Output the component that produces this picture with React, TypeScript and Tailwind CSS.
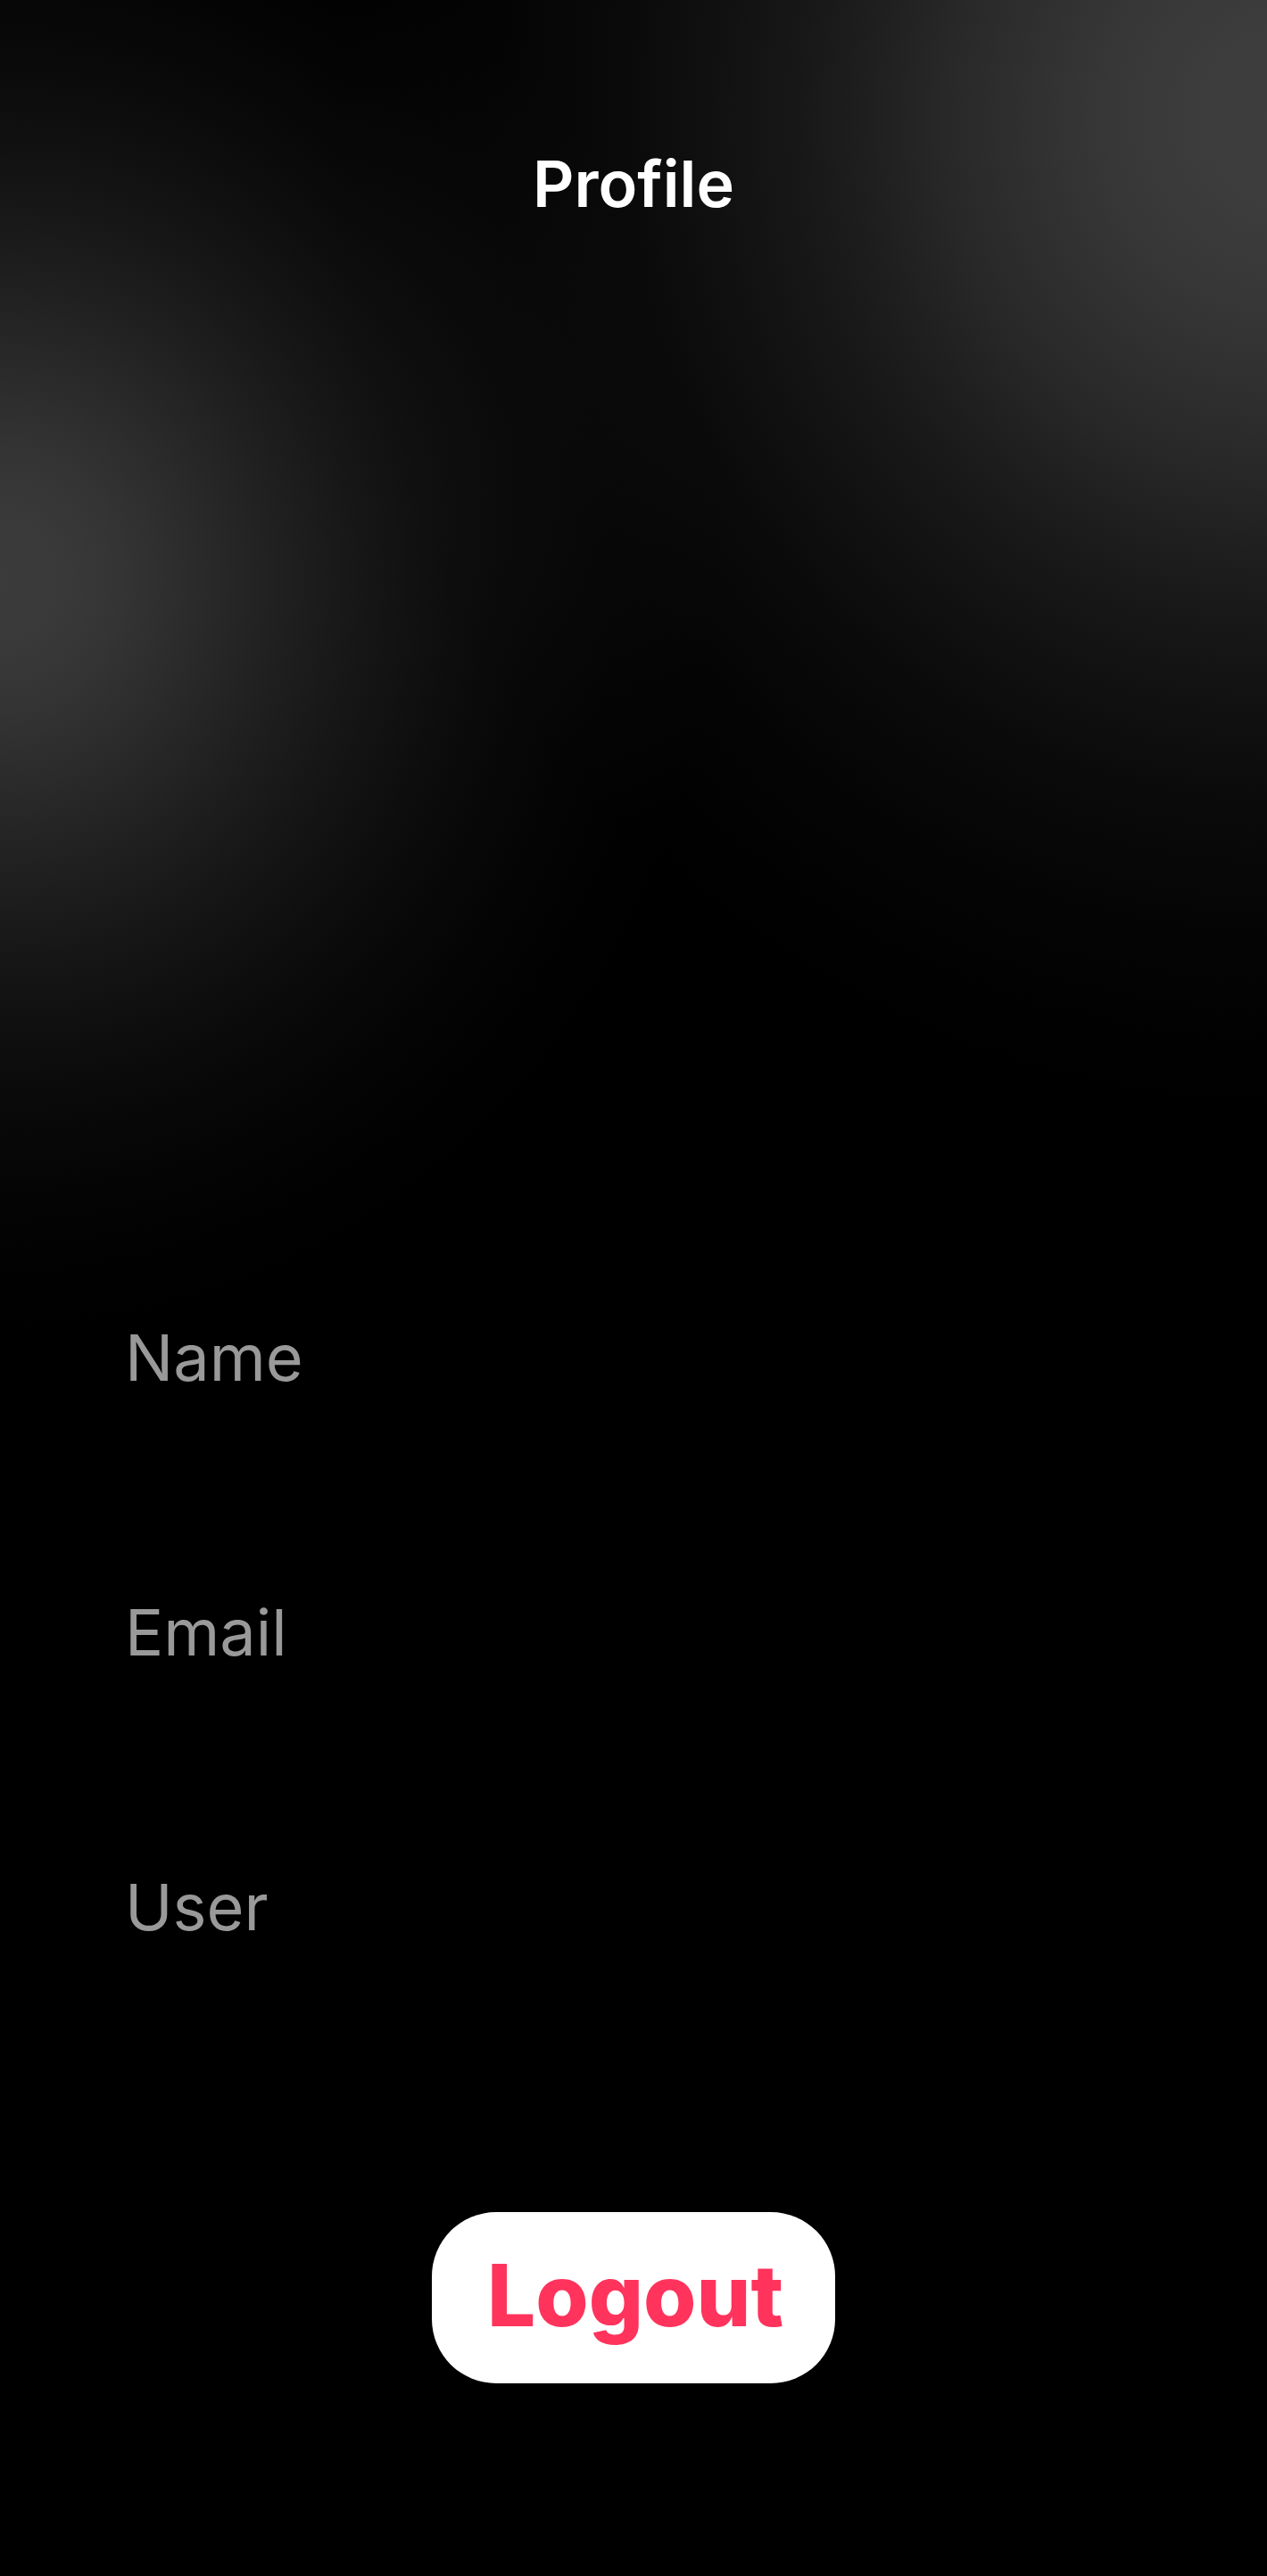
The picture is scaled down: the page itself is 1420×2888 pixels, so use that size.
const fields = ["Name", "Email", "User"];

export default function App() {
  return (
    <main className="relative isolate flex min-h-screen flex-col overflow-hidden bg-black px-[140px] pt-[160px] pb-[216px] font-['Inter',sans-serif]">
      <div aria-hidden="true" className="absolute top-[-190px] left-[-800px] -z-10 h-[1680px] w-[1600px] bg-[radial-gradient(closest-side,#3b3b3b_0%,#393939_9%,#343434_17%,#2b2b2b_27%,#202020_39%,#161616_51%,#0d0d0d_64%,#080808_73%,#030303_86%,#000000_100%)] mix-blend-screen" />
      <div aria-hidden="true" className="absolute top-[-980px] right-[-1080px] -z-10 h-[2220px] w-[2120px] bg-[radial-gradient(closest-side,#3e3e3e_0%,#3c3c3c_10%,#373737_19%,#303030_27%,#282828_36%,#1f1f1f_44%,#181818_51%,#111111_60%,#0a0a0a_70%,#040404_84%,#000000_100%)] mix-blend-screen" />
      <h1 className="text-center text-[72px] leading-[92px] font-semibold text-white">Profile</h1>
      <dl className="mt-auto flex flex-col gap-[216px]">
        {fields.map((field) => (
          <dt key={field} className="text-[72px] leading-[92px] text-[#999999]">{field}</dt>
        ))}
      </dl>
      <button type="button" className="mt-[296px] self-center rounded-[72px] bg-white pt-[33px] pr-[58px] pb-[39px] pl-[62px] text-[96px] leading-[120px] font-extrabold text-[#ff335c]">
        Logout
      </button>
    </main>
  );
}
